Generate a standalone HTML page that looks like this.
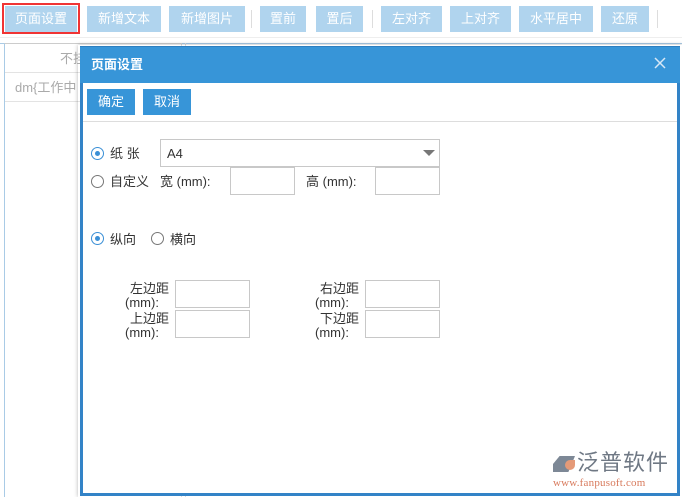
<!DOCTYPE html>
<html><head><meta charset="utf-8">
<style>
*{box-sizing:border-box;margin:0;padding:0}
body{width:682px;height:497px;overflow:hidden;background:#fff;font-family:"Liberation Sans","Noto Sans CJK SC",sans-serif;font-size:13px;color:#333;position:relative}
.b{position:absolute;top:6px;height:26px;background:#b0d4ee;color:#fff;font-size:13px;line-height:26px;text-align:center}
.sep{position:absolute;top:10px;width:1px;height:18px;background:#ddd}
.abs{position:absolute}
.inp{position:absolute;border:1px solid #c8c8c8;background:#fff}
.radio{position:absolute;width:13px;height:13px;border:1px solid #777;border-radius:50%;background:#fff}
.radio.on{border-color:#3a8fd6}
.radio.on::after{content:"";position:absolute;left:3px;top:3px;width:5px;height:5px;border-radius:50%;background:#3a8fd6}
.t{position:absolute;font-size:13px;color:#333;white-space:nowrap;line-height:15px}
</style></head><body>
<div class="abs" style="left:0;top:0;width:682px;height:38px;background:#fff;border-bottom:1px solid #eee"></div>
<div class="abs" style="left:2px;top:3px;width:78px;height:31px;border:2px solid #f03434"></div>
<div class="b" style="left:5px;width:72px">页面设置</div>
<div class="b" style="left:87px;width:74px">新增文本</div>
<div class="b" style="left:169px;width:76px">新增图片</div>
<div class="sep" style="left:251px"></div>
<div class="b" style="left:260px;width:46px">置前</div>
<div class="b" style="left:316px;width:47px">置后</div>
<div class="sep" style="left:372px"></div>
<div class="b" style="left:381px;width:61px">左对齐</div>
<div class="b" style="left:450px;width:61px">上对齐</div>
<div class="b" style="left:519px;width:74px">水平居中</div>
<div class="b" style="left:601px;width:48px">还原</div>
<div class="sep" style="left:657px"></div>
<div class="abs" style="left:0;top:43px;width:682px;height:1px;background:#a9cbe6"></div>
<div class="abs" style="left:4px;top:43px;width:178px;height:454px;border-left:1px solid #a9cbe6;border-right:1px solid #ddd;border-top:1px solid #ccc"></div>
<div class="abs" style="left:5px;top:72px;width:176px;height:1px;background:#e3e3e3"></div>
<div class="abs" style="left:5px;top:101px;width:176px;height:1px;background:#e3e3e3"></div>
<div class="t" style="left:60px;top:51px;color:#aaa">不挂</div>
<div class="t" style="left:15px;top:80px;color:#aaa">dm{工作中</div>
<div class="abs" style="left:185px;top:43px;width:1px;height:454px;background:#ddd"></div>
<div class="abs" style="left:78px;top:45px;width:604px;height:452px;box-shadow:0 0 4px rgba(0,0,0,.3)"></div>
<div class="abs" style="left:80px;top:46px;width:600px;height:450px;background:#fff;border:3px solid #3383c7;border-top:none"></div>
<div class="abs" style="left:80px;top:46px;width:600px;height:37px;background:#3795d8;border-top:1px solid #2d7fc0"></div>
<div class="t" style="left:91px;top:57px;color:#fff;font-weight:bold;font-size:13px">页面设置</div>
<svg class="abs" style="left:654px;top:57px" width="12" height="12"><path d="M1 1L11 11M11 1L1 11" stroke="#d8e8f6" stroke-width="1.5"/></svg>
<div class="abs" style="left:87px;top:89px;width:48px;height:26px;background:#3795d8;color:#fff;text-align:center;line-height:26px">确定</div>
<div class="abs" style="left:143px;top:89px;width:48px;height:26px;background:#3795d8;color:#fff;text-align:center;line-height:26px">取消</div>
<div class="abs" style="left:83px;top:121px;width:594px;height:1px;background:#ddd"></div>
<div class="radio on" style="left:91px;top:147px"></div>
<div class="t" style="left:110px;top:146px">纸 张</div>
<div class="inp" style="left:160px;top:139px;width:280px;height:28px"></div>
<div class="t" style="left:167px;top:146px">A4</div>
<div class="abs" style="left:423px;top:150px;width:0;height:0;border-left:6px solid transparent;border-right:6px solid transparent;border-top:6px solid #777"></div>
<div class="radio" style="left:91px;top:175px"></div>
<div class="t" style="left:110px;top:174px">自定义</div>
<div class="t" style="left:160px;top:174px">宽 (mm):</div>
<div class="inp" style="left:230px;top:167px;width:65px;height:28px"></div>
<div class="t" style="left:306px;top:174px">高 (mm):</div>
<div class="inp" style="left:375px;top:167px;width:65px;height:28px"></div>
<div class="radio on" style="left:91px;top:232px"></div>
<div class="t" style="left:110px;top:232px">纵向</div>
<div class="radio" style="left:151px;top:232px"></div>
<div class="t" style="left:170px;top:232px">横向</div>
<div class="t" style="left:130px;top:281px">左边距</div>
<div class="t" style="left:125px;top:295px">(mm):</div>
<div class="inp" style="left:175px;top:280px;width:75px;height:28px"></div>
<div class="t" style="left:130px;top:311px">上边距</div>
<div class="t" style="left:125px;top:325px">(mm):</div>
<div class="inp" style="left:175px;top:310px;width:75px;height:28px"></div>
<div class="t" style="left:320px;top:281px">右边距</div>
<div class="t" style="left:315px;top:295px">(mm):</div>
<div class="inp" style="left:365px;top:280px;width:75px;height:28px"></div>
<div class="t" style="left:320px;top:311px">下边距</div>
<div class="t" style="left:315px;top:325px">(mm):</div>
<div class="inp" style="left:365px;top:310px;width:75px;height:28px"></div>
<div class="abs" style="left:553px;top:456px;width:22px;height:16px;background:#7d8896;clip-path:polygon(30% 0,100% 0,70% 100%,0 100%,0 50%)"></div>
<div class="abs" style="left:565px;top:460px;width:10px;height:10px;background:#e59a78;border-radius:50% 0 50% 50%"></div>
<div class="t" style="left:577px;top:451px;font-size:22px;line-height:24px;color:#6f7884;letter-spacing:1px">泛普软件</div>
<div class="t" style="left:553px;top:477px;font-size:11px;line-height:12px;color:#d87a5c;font-family:'Liberation Serif',serif;letter-spacing:0.2px">www.fanpusoft.com</div>
</body></html>
